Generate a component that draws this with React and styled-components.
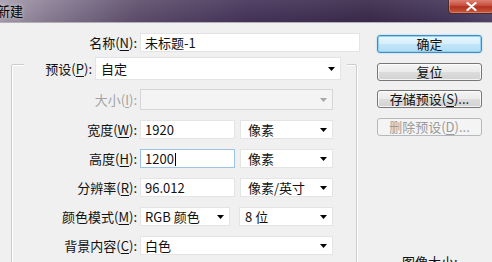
import React from 'react';
import styled, { createGlobalStyle } from 'styled-components';

const Global = createGlobalStyle`
  html, body { margin: 0; padding: 0; background: #f0f0f0; overflow: hidden; }
  body { font-family: "Noto Sans CJK SC", "Noto Sans", sans-serif; }
`;

const Window = styled.div`
  width: 492px;
  height: 262px;
  overflow: hidden;
  background: #f0f0f0;
  display: flex;
  flex-direction: column;
  font-family: "Noto Sans CJK SC", "Noto Sans", sans-serif;
  font-size: 13px;
  color: #111;
`;

const TitleBar = styled.div`
  height: 22px;
  flex: none;
  display: flex;
  align-items: flex-start;
  justify-content: space-between;
  background:
    linear-gradient(180deg, rgba(255,255,255,0.08), rgba(0,0,0,0.05)),
    linear-gradient(90deg, #a79eae 0%, #8a7e95 10%, #5e4e6d 28%, #45345a 50%, #3b2a4c 75%, #45365a 92%, #54456a 100%);
  border-bottom: 1px solid #b3adb8;
`;

const Title = styled.span`
  margin: 2px 0 0 -3px;
  line-height: 18px;
  font-size: 13px;
  color: #000;
  text-shadow: 0 0 4px rgba(255, 255, 255, 0.7);
`;

const CloseButton = styled.div`
  width: 46px;
  height: 15px;
  margin: -1px -2px 0 0;
  box-sizing: border-box;
  border: 1px solid #4a2a2a;
  border-top: none;
  border-radius: 0 0 4px 4px;
  background: linear-gradient(180deg, #e08a7c 0%, #c9503e 45%, #b23220 55%, #c85a3c 100%);
  box-shadow: inset 0 0 0 1px rgba(255, 200, 190, 0.35);
  display: flex;
  align-items: center;
  justify-content: center;
`;

const Body = styled.div`
  flex: 1;
  display: flex;
  padding-top: 10px;
  min-height: 0;
`;

const LeftCol = styled.div`
  width: 360px;
  flex: none;
  display: flex;
  flex-direction: column;
`;

const Row = styled.div`
  display: flex;
  height: ${p => p.$h || 19}px;
  flex: none;
`;

const Label = styled.div`
  width: ${p => p.$w}px;
  flex: none;
  box-sizing: border-box;
  padding-right: 3px;
  text-align: right;
  line-height: ${p => p.$lh || 19}px;
  white-space: nowrap;
  color: ${p => (p.$disabled ? '#a3a3a3' : '#111')};
`;

const U = styled.span`
  text-decoration: underline;
  text-underline-offset: 2px;
`;

const Field = styled.div`
  width: ${p => p.$w}px;
  flex: none;
  box-sizing: border-box;
  height: 100%;
  display: flex;
  align-items: center;
  padding-left: ${p => p.$pl ?? 4}px;
  background: ${p => (p.$disabled ? '#f4f4f4' : '#fff')};
  border: 1px solid ${p => (p.$focused ? '#9cc2e6' : p.$disabled ? '#d6d6d6' : '#e4e4e4')};
  margin-left: ${p => p.$ml || 0}px;
  white-space: nowrap;
  line-height: 17px;
`;

const FieldText = styled.span`
  flex: 1;
`;

const Caret = styled.span`
  display: inline-block;
  width: 1px;
  height: 13px;
  background: #000;
  vertical-align: -2px;
  margin-left: 1px;
`;

const ArrowIcon = styled.svg`
  flex: none;
  margin-right: 5px;
`;

const Arrow = ({ disabled }) => (
  <ArrowIcon width="7" height="4" viewBox="0 0 7 4">
    <polygon points="0,0 7,0 3.5,4" fill={disabled ? '#a8a8a8' : '#000'} />
  </ArrowIcon>
);

const GroupBox = styled.div`
  margin: 12px 0 0 11px;
  width: 346px;
  flex: none;
  height: 260px;
  box-sizing: border-box;
  border: 1px solid #cdcdcd;
  border-radius: 2px;
  box-shadow: inset 1px 1px 0 #fff, 1px 1px 0 #fff;
  display: flex;
  flex-direction: column;
`;

const Legend = styled.div`
  display: flex;
  align-self: flex-start;
  height: 23px;
  margin: -8px 0 0 12px;
  padding-right: 6px;
  background: #f0f0f0;
`;

const Rows = styled.div`
  display: flex;
  flex-direction: column;
  gap: 10px;
  padding-top: 9px;
`;

const RightCol = styled.div`
  width: 105px;
  margin-left: 17px;
  flex: none;
  display: flex;
  flex-direction: column;
  padding-top: 2px;
`;

const Buttons = styled.div`
  display: flex;
  flex-direction: column;
  gap: 9.5px;
`;

const Button = styled.div`
  height: 18px;
  box-sizing: border-box;
  border-radius: 3px;
  display: flex;
  align-items: center;
  justify-content: center;
  line-height: 16px;
  white-space: nowrap;
  color: ${p => (p.$disabled ? '#9a9a9a' : '#111')};
  border: 1px solid ${p => (p.$default ? '#3c8fc4' : p.$disabled ? '#b5b9bc' : '#777')};
  background: ${p =>
    p.$default
      ? 'linear-gradient(180deg, #e9f6fd 0%, #d6eefb 50%, #c2e6f9 51%, #b2ddf5 100%)'
      : p.$disabled
      ? '#f4f4f4'
      : 'linear-gradient(180deg, #f4f4f4 0%, #ebebeb 50%, #dddddd 51%, #d2d2d2 100%)'};
  box-shadow: ${p =>
    p.$default ? 'inset 0 0 0 1px #8fd1f2, 0 0 2px rgba(60,150,210,0.4)' : p.$disabled ? 'none' : 'inset 0 0 0 1px rgba(255,255,255,0.75)'};
`;

const ImageSize = styled.div`
  margin-top: 118px;
  padding-left: 25px;
  line-height: 16px;
  font-size: 13px;
  white-space: nowrap;
`;

export default function App() {
  return (
    <>
      <Global />
      <Window>
        <TitleBar>
          <Title>新建</Title>
          <CloseButton>
            <svg width="11" height="9" viewBox="0 0 11 9">
              <path d="M1.5 1 L9.5 8 M9.5 1 L1.5 8" stroke="#fff" strokeWidth="2.2" strokeLinecap="round" />
            </svg>
          </CloseButton>
        </TitleBar>
        <Body>
          <LeftCol>
            <Row>
              <Label $w={140}>名称(<U>N</U>):</Label>
              <Field $w={220}>
                <FieldText>未标题-1</FieldText>
              </Field>
            </Row>
            <GroupBox>
              <Legend>
                <Label $w={71} $lh={23}>预设(<U>P</U>):</Label>
                <Field $w={246} $pl={5}>
                  <FieldText>自定</FieldText>
                  <Arrow />
                </Field>
              </Legend>
              <Rows>
                <Row $h={21}>
                  <Label $w={128} $lh={21} $disabled>大小(<U>I</U>):</Label>
                  <Field $w={193} $disabled>
                    <FieldText />
                    <Arrow disabled />
                  </Field>
                </Row>
                <Row>
                  <Label $w={128}>宽度(<U>W</U>):</Label>
                  <Field $w={95}>
                    <FieldText>1920</FieldText>
                  </Field>
                  <Field $w={93} $ml={5} $pl={7}>
                    <FieldText>像素</FieldText>
                    <Arrow />
                  </Field>
                </Row>
                <Row>
                  <Label $w={128}>高度(<U>H</U>):</Label>
                  <Field $w={95} $focused>
                    <FieldText>
                      1200
                      <Caret />
                    </FieldText>
                  </Field>
                  <Field $w={93} $ml={5} $pl={7}>
                    <FieldText>像素</FieldText>
                    <Arrow />
                  </Field>
                </Row>
                <Row>
                  <Label $w={128}>分辨率(<U>R</U>):</Label>
                  <Field $w={95}>
                    <FieldText>96.012</FieldText>
                  </Field>
                  <Field $w={93} $ml={5} $pl={7}>
                    <FieldText>像素/英寸</FieldText>
                    <Arrow />
                  </Field>
                </Row>
                <Row>
                  <Label $w={128}>颜色模式(<U>M</U>):</Label>
                  <Field $w={90}>
                    <FieldText>RGB 颜色</FieldText>
                    <Arrow />
                  </Field>
                  <Field $w={94} $ml={9} $pl={5}>
                    <FieldText>8 位</FieldText>
                    <Arrow />
                  </Field>
                </Row>
                <Row>
                  <Label $w={128}>背景内容(<U>C</U>):</Label>
                  <Field $w={193}>
                    <FieldText>白色</FieldText>
                    <Arrow />
                  </Field>
                </Row>
              </Rows>
            </GroupBox>
          </LeftCol>
          <RightCol>
            <Buttons>
              <Button $default>确定</Button>
              <Button>复位</Button>
              <Button>存储预设(<U>S</U>)...</Button>
              <Button $disabled>删除预设(<U>D</U>)...</Button>
            </Buttons>
            <ImageSize>图像大小:</ImageSize>
          </RightCol>
        </Body>
      </Window>
    </>
  );
}
